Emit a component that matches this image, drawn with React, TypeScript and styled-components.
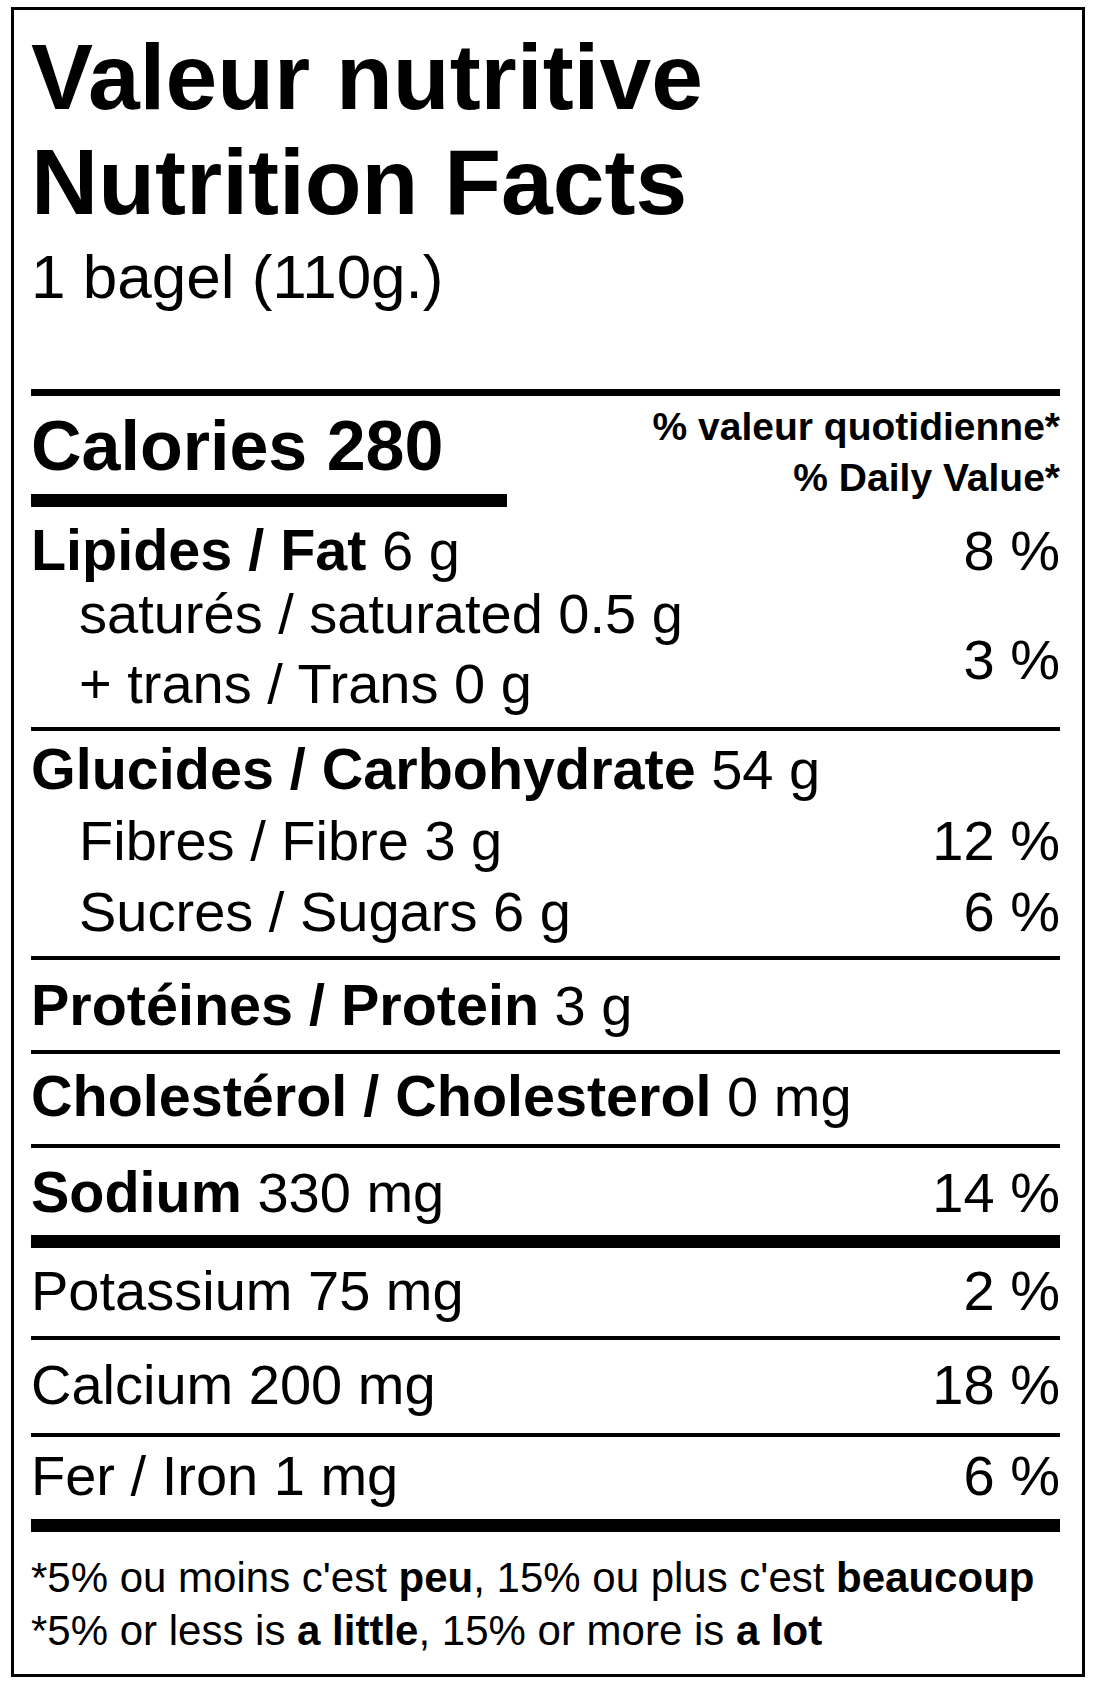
import React from "react";
import styled, { createGlobalStyle } from "styled-components";

const GlobalStyle = createGlobalStyle`
  html, body { margin: 0; padding: 0; background: #fff; }
  body { font-family: "Liberation Sans", Arial, Helvetica, sans-serif; color: #000; }
  *, *::before, *::after { box-sizing: border-box; }
`;

const Panel = styled.section`
  margin: 7px 0 0 11px;
  width: 1074px;
  height: 1670px;
  border: 3px solid #000;
  padding: 0 22px 0 17px;
  display: flex;
  flex-direction: column;
  background: #fff;
`;

const Title = styled.h1`
  margin: 15.3px 0 0;
  font-size: 93px;
  line-height: 105px;
  font-weight: 700;
  white-space: nowrap;
`;

const Serving = styled.div`
  margin-top: 9.9px;
  font-size: 62px;
  line-height: 64px;
  white-space: nowrap;
`;

const Rule = styled.div<{ $weight: number; $width?: number; $gap?: number }>`
  flex-shrink: 0;
  height: ${(p) => p.$weight}px;
  width: ${(p) => (p.$width ? `${p.$width}px` : "100%")};
  margin-top: ${(p) => p.$gap ?? 0}px;
  background: #000;
`;

const CaloriesSection = styled.div`
  display: flex;
  justify-content: space-between;
  align-items: flex-start;
`;

const CaloriesBlock = styled.div`
  padding-top: 12.7px;
  display: flex;
  flex-direction: column;
`;

const Calories = styled.div`
  font-size: 70px;
  line-height: 76px;
  font-weight: 700;
  white-space: nowrap;
`;

const DailyHeader = styled.div`
  padding-top: 5px;
  text-align: right;
  font-size: 39px;
  line-height: 51px;
  font-weight: 700;
  white-space: nowrap;
`;

const Section = styled.div<{ $top: number; $bottom: number }>`
  padding: ${(p) => p.$top}px 0 ${(p) => p.$bottom}px;
  display: flex;
  flex-direction: column;
`;

const Row = styled.div<{ $lh: number }>`
  display: flex;
  justify-content: space-between;
  align-items: flex-start;
  font-size: 56px;
  line-height: ${(p) => p.$lh}px;
`;

const Label = styled.span<{ $indent?: boolean }>`
  padding-left: ${(p) => (p.$indent ? 48 : 0)}px;
  white-space: nowrap;
`;

const Lines = styled.div`
  display: flex;
  flex-direction: column;
  gap: 7px;
`;

const Strong = styled.b`
  font-weight: 700;
  font-size: 57.5px;
  line-height: 1;
`;

const FootStrong = styled.b`
  font-weight: 700;
`;

const Pct = styled.span<{ $offset?: number }>`
  padding-top: ${(p) => p.$offset ?? 0}px;
  text-align: right;
  white-space: nowrap;
`;

const Footnotes = styled.div`
  padding-top: 19px;
  font-size: 42px;
  line-height: 53px;
  white-space: nowrap;
`;

type Item = {
  bold?: string;
  text: string;
  pct?: string;
  top: number;
  bottom: number;
};

const singles: Item[] = [
  { bold: "Protéines / Protein", text: " 3 g", top: 10, bottom: 9 },
  { bold: "Cholestérol / Cholesterol", text: " 0 mg", top: 7, bottom: 12 },
];

const minerals: Item[] = [
  { text: "Potassium 75 mg", pct: "2 %", top: 7, bottom: 10 },
  { text: "Calcium 200 mg", pct: "18 %", top: 9, bottom: 13 },
  { text: "Fer / Iron 1 mg", pct: "6 %", top: 3, bottom: 8 },
];

export default function App() {
  return (
    <>
      <GlobalStyle />
      <Panel>
        <Title>
          Valeur nutritive
          <br />
          Nutrition Facts
        </Title>
        <Serving>1 bagel (110g.)</Serving>

        <Rule $weight={7} $gap={79.5} />

        <CaloriesSection>
          <CaloriesBlock>
            <Calories>Calories 280</Calories>
            <Rule $weight={13} $width={476} $gap={9.6} />
          </CaloriesBlock>
          <DailyHeader>
            % valeur quotidienne*
            <br />% Daily Value*
          </DailyHeader>
        </CaloriesSection>

        <Section $top={11.75} $bottom={12.25}>
          <Row $lh={63}>
            <Label>
              <Strong>Lipides / Fat</Strong> 6 g
            </Label>
            <Pct>8 %</Pct>
          </Row>
          <Row $lh={63}>
            <Lines>
              <Label $indent>saturés / saturated 0.5 g</Label>
              <Label $indent>+ trans / Trans 0 g</Label>
            </Lines>
            <Pct $offset={46}>3 %</Pct>
          </Row>
        </Section>
        <Rule $weight={4} />

        <Section $top={3} $bottom={9}>
          <Row $lh={71}>
            <Label>
              <Strong>Glucides / Carbohydrate</Strong> 54 g
            </Label>
          </Row>
          <Row $lh={71}>
            <Label $indent>Fibres / Fibre 3 g</Label>
            <Pct>12 %</Pct>
          </Row>
          <Row $lh={71}>
            <Label $indent>Sucres / Sugars 6 g</Label>
            <Pct>6 %</Pct>
          </Row>
        </Section>
        <Rule $weight={4} />

        {singles.map((s) => (
          <React.Fragment key={s.bold}>
            <Section $top={s.top} $bottom={s.bottom}>
              <Row $lh={71}>
                <Label>
                  <Strong>{s.bold}</Strong>
                  {s.text}
                </Label>
              </Row>
            </Section>
            <Rule $weight={4} />
          </React.Fragment>
        ))}

        <Section $top={9} $bottom={7}>
          <Row $lh={71}>
            <Label>
              <Strong>Sodium</Strong> 330 mg
            </Label>
            <Pct>14 %</Pct>
          </Row>
        </Section>
        <Rule $weight={13} />

        {minerals.map((m, i) => (
          <React.Fragment key={m.text}>
            <Section $top={m.top} $bottom={m.bottom}>
              <Row $lh={71}>
                <Label>{m.text}</Label>
                <Pct>{m.pct}</Pct>
              </Row>
            </Section>
            <Rule $weight={i === minerals.length - 1 ? 13 : 4} />
          </React.Fragment>
        ))}

        <Footnotes>
          *5% ou moins c'est <FootStrong>peu</FootStrong>, 15% ou plus c'est{" "}
          <FootStrong>beaucoup</FootStrong>
          <br />
          *5% or less is <FootStrong>a little</FootStrong>, 15% or more is{" "}
          <FootStrong>a lot</FootStrong>
        </Footnotes>
      </Panel>
    </>
  );
}
